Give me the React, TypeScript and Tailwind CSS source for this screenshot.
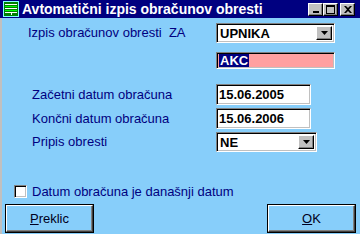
const FONT = "font-['Liberation_Sans',Arial,sans-serif]";

const SUNKEN =
  'border-t border-l border-t-[#808080] border-l-[#808080] border-b border-r border-b-white border-r-white shadow-[inset_1px_1px_0_#000,inset_-1px_-1px_0_#c0c0c0]';

function TitleIcon() {
  return (
    <svg width="16" height="16" viewBox="0 0 16 16" className="shrink-0">
      <rect x="0.5" y="0.5" width="15" height="15" fill="#008000" stroke="#80ffff" />
      <rect x="2" y="3" width="12" height="1" fill="#ffffff" />
      <rect x="2" y="5" width="12" height="1" fill="#00ff00" />
      <rect x="2" y="7" width="12" height="1" fill="#ffffff" />
      <rect x="2" y="9" width="12" height="1" fill="#00ff00" />
      <rect x="2" y="11" width="12" height="1" fill="#ffffff" />
      <rect x="8" y="12" width="1" height="2" fill="#ffffff" />
    </svg>
  );
}

function CaptionButton({ kind }: { kind: 'min' | 'max' | 'close' }) {
  return (
    <div className="w-[15px] h-[13px] bg-[#c0c0c0] flex items-center justify-center border-t border-l border-t-white border-l-white border-b border-r border-b-black border-r-black shadow-[inset_-1px_-1px_0_#808080]">
      {kind === 'min' && (
        <svg width="8" height="8" viewBox="0 0 8 8">
          <rect x="1" y="6" width="6" height="2" fill="#000" />
        </svg>
      )}
      {kind === 'max' && (
        <svg width="9" height="9" viewBox="0 0 9 9">
          <rect x="0.5" y="0.5" width="8" height="8" fill="none" stroke="#000" />
          <rect x="0" y="0" width="9" height="2" fill="#000" />
        </svg>
      )}
      {kind === 'close' && (
        <svg width="8" height="7" viewBox="0 0 8 7">
          <path d="M0 0h2l2 2 2-2h2L5 3.5 8 7H6L4 5 2 7H0l3-3.5z" fill="#000" />
        </svg>
      )}
    </div>
  );
}

function DropArrow() {
  return (
    <div className="w-[16px] h-full bg-[#c0c0c0] flex items-center justify-center border-t border-l border-t-white border-l-white border-b border-r border-b-black border-r-black shadow-[inset_-1px_-1px_0_#808080]">
      <svg width="7" height="4" viewBox="0 0 7 4">
        <path d="M0 0h7L3.5 4z" fill="#000" />
      </svg>
    </div>
  );
}

function Combo({ value, width }: { value: string; width: string }) {
  return (
    <div className={`${width} h-[20px] bg-white flex p-[2px] ${SUNKEN}`}>
      <span className="flex-1 text-[13px] font-bold text-black leading-[16px] pl-[1px]">{value}</span>
      <DropArrow />
    </div>
  );
}

function Field({ children, width, tone = 'bg-white', height = 'h-[21px]' }: { children: React.ReactNode; width: string; tone?: string; height?: string }) {
  return (
    <div className={`${width} ${height} ${tone} flex items-center px-[2px] ${SUNKEN}`}>
      {children}
    </div>
  );
}

function Button({ accel, rest }: { accel: string; rest: string }) {
  return (
    <div className="w-[89px] h-[29px] border border-black flex">
      <div className="flex-1 flex items-center justify-center border-t border-l border-t-white border-l-white border-b border-r border-b-[#404040] border-r-[#404040] shadow-[inset_-1px_-1px_0_#808080] text-[13px] text-[#000020]">
        <span>
          <span className="underline">{accel}</span>
          {rest}
        </span>
      </div>
    </div>
  );
}

export default function App() {
  return (
    <div className={`w-[360px] h-[234px] bg-[#87cefa] flex flex-col overflow-hidden ${FONT}`}>
      <div className="h-[18px] bg-[#000080] flex items-center pl-[3px] pr-[5px] shrink-0">
        <TitleIcon />
        <span className="ml-[3px] text-white font-bold text-[14px] leading-none">Avtomatični izpis obračunov obresti</span>
        <div className="ml-auto flex items-center">
          <CaptionButton kind="min" />
          <CaptionButton kind="max" />
          <div className="w-[2px]" />
          <CaptionButton kind="close" />
        </div>
      </div>

      <div className="flex-1 flex flex-col border-l-2 border-[#c0c0c0] text-[13px] text-[#000080]">
        <div className="mt-[5px] flex items-center h-[20px]">
          <span className="w-[214px] pl-[26px] whitespace-pre">Izpis obračunov obresti  ZA</span>
          <Combo value="UPNIKA" width="w-[119px]" />
        </div>

        <div className="mt-[9px] flex items-center">
          <span className="w-[214px]" />
          <Field width="w-[119px]" tone="bg-[#ffa0a0]" height="h-[17px]">
            <span className="bg-[#000080] text-white font-bold leading-[13px] px-[1px]">AKC</span>
          </Field>
        </div>

        <div className="mt-[15px] flex items-center h-[21px]">
          <span className="w-[214px] pl-[30px]">Začetni datum obračuna</span>
          <Field width="w-[95px]">
            <span className="font-bold text-black">15.06.2005</span>
          </Field>
        </div>

        <div className="mt-[3px] flex items-center h-[21px]">
          <span className="w-[214px] pl-[30px]">Končni datum obračuna</span>
          <Field width="w-[95px]">
            <span className="font-bold text-black">15.06.2006</span>
          </Field>
        </div>

        <div className="mt-[3px] flex items-center h-[20px]">
          <span className="w-[214px] pl-[30px]">Pripis obresti</span>
          <Combo value="NE" width="w-[101px]" />
        </div>

        <div className="mt-[33px] flex items-center h-[13px] pl-[12px]">
          <div className={`w-[13px] h-[13px] bg-white ${SUNKEN}`} />
          <span className="ml-[5px]">Datum obračuna je današnji datum</span>
        </div>

        <div className="mt-[6px] flex justify-between pl-[3px] pr-[4px]">
          <Button accel="P" rest="reklic" />
          <Button accel="O" rest="K" />
        </div>
      </div>
    </div>
  );
}
